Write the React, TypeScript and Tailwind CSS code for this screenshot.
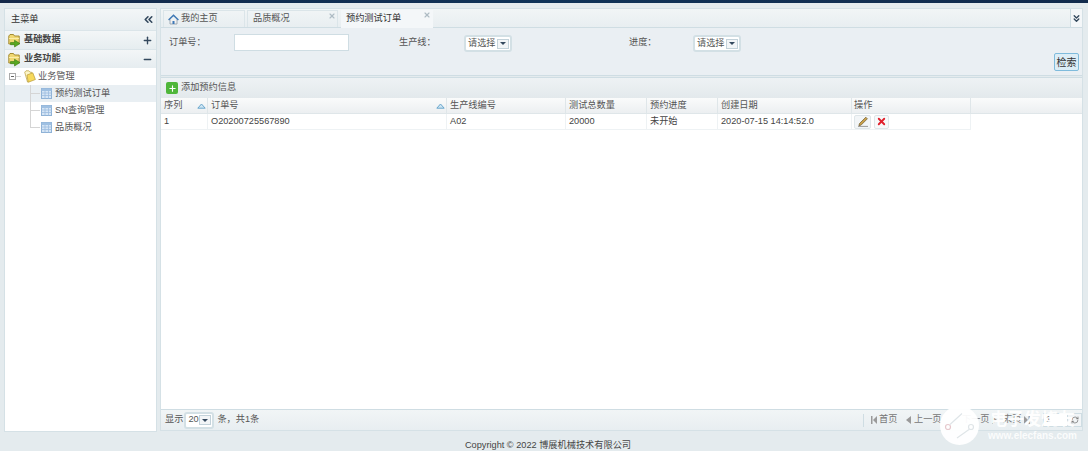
import { ChevronsLeft, ChevronsDown, Minus, Plus, X, RefreshCw } from "lucide-react"

const font = "font-['Liberation_Sans','Noto_Sans_CJK_SC',sans-serif]"

function FolderArrow() {
  return (
    <svg width="13" height="15" viewBox="0 0 13 15" className="shrink-0">
      <path d="M.8 3 2 1.5h3.5L6.5 3h4.7v8H.8z" fill="#f0d873" stroke="#9c8326" strokeWidth="0.9" />
      <path d="M1 5h10v1H1z" fill="#fbeea8" />
      <path d="M2.5 9.5h4V7.2l5.5 3.4-5.5 3.4v-2.3h-4z" fill="#57a820" stroke="#3a7a10" strokeWidth="0.6" />
    </svg>
  )
}

function Folder() {
  return (
    <svg width="12" height="13" viewBox="0 0 12 13" className="shrink-0">
      <path d="M.7 2.2 2 .8h2.8L6 2.2h1.5L9.5 9 3.5 12z" fill="#fdf6c8" stroke="#b89b3a" strokeWidth="0.7" />
      <path d="M3 5 8.8 2.8 11.4 9.5 4.2 12.3z" fill="#f7d95c" stroke="#b89b3a" strokeWidth="0.7" />
    </svg>
  )
}

function GridIcon() {
  return (
    <svg width="11" height="11" viewBox="0 0 11 11" className="shrink-0">
      <rect x="0.5" y="0.5" width="10" height="10" fill="#d5e5f5" stroke="#8fb2d6" />
      <rect x="0.5" y="0.5" width="10" height="2.5" fill="#9fc0e2" />
      <path d="M0.5 5h10M0.5 7.5h10M4 3v7.5M7.5 3v7.5" stroke="#9dbde0" strokeWidth="0.8" />
    </svg>
  )
}

function HomeIcon() {
  return (
    <svg width="11" height="11" viewBox="0 0 11 11" className="shrink-0">
      <path d="M2 5.5V10h7V5.5" fill="#f2f2f2" stroke="#8d9aa5" strokeWidth="0.8" />
      <path d="M4.5 10V7h2v3" fill="#3d78b8" />
      <path d="M.6 6 5.5 1.2 10.4 6" fill="none" stroke="#3f78b5" strokeWidth="1.5" />
    </svg>
  )
}

function SortMark() {
  return (
    <svg width="9" height="6" viewBox="0 0 9 6" className="ml-auto mr-[1px]">
      <path d="M.8 5.2 4.5 1l3.7 4.2z" fill="#cfe6f3" stroke="#69a6cc" strokeWidth="1" />
    </svg>
  )
}

function PencilIcon() {
  return (
    <svg width="12" height="11" viewBox="0 0 12 11">
      <path d="M2.5 7.5 8.8 1.2l1.6 1.6-6.3 6.3-2.2.6z" fill="#c9a04a" stroke="#6f5a2e" strokeWidth="0.7" />
      <path d="M1 10.4h10" stroke="#9a9a9a" strokeWidth="1" />
    </svg>
  )
}

function SkipIcon({ flip }: { flip?: boolean }) {
  return (
    <svg width="6" height="8" viewBox="0 0 6 8" className={flip ? "rotate-180" : ""}>
      <path d="M0 0h1.5v8H0zM6 0v8L2 4z" fill="#9a9a9a" />
    </svg>
  )
}

function ArrowIcon({ flip }: { flip?: boolean }) {
  return (
    <svg width="5" height="8" viewBox="0 0 5 8" className={flip ? "rotate-180" : ""}>
      <path d="M5 0v8L0 4z" fill="#9a9a9a" />
    </svg>
  )
}

function SelectBox({ label, className }: { label: string; className: string }) {
  return (
    <div className={`flex h-[17px] items-center justify-between whitespace-nowrap rounded-[3px] border-2 border-[#d3e0e5] bg-white pl-[2px] pr-[1px] text-[#555] ${className}`}>
      <span>{label}</span>
      <span className="flex h-[10px] w-[12px] items-center justify-center border border-[#c3d2da] bg-[#f2f5f7]">
        <span className="h-0 w-0 border-x-[3px] border-t-[3px] border-x-transparent border-t-[#34495e]" />
      </span>
    </div>
  )
}

const columns = [
  { title: "序列", value: "1", width: "w-[47px]", sort: true },
  { title: "订单号", value: "O20200725567890", width: "w-[239px]", sort: true },
  { title: "生产线编号", value: "A02", width: "w-[119px]" },
  { title: "测试总数量", value: "20000", width: "w-[81px]" },
  { title: "预约进度", value: "未开始", width: "w-[71px]" },
  { title: "创建日期", value: "2020-07-15 14:14:52.0", width: "w-[134px]" },
]

function Sidebar() {
  const groupRow = "flex h-[19px] items-center gap-[3px] border-t border-[#dbe5e9] bg-gradient-to-b from-[#f3f6f7] to-[#e6edf0] pl-[3px] pr-[3px] font-bold text-[#444]"
  const items = ["预约测试订单", "SN查询管理", "品质概况"]
  return (
    <aside className="flex h-[424px] w-[153px] shrink-0 flex-col border border-[#d5e1e6] bg-white text-[9.2px]">
      <div className="flex h-[21px] items-center justify-between bg-gradient-to-b from-[#f3f6f7] to-[#e6edf0] pl-[6px] pr-[1px] text-[#333]">
        <span>主菜单</span>
        <ChevronsLeft size={13} strokeWidth={3} className="text-[#34495e]" />
      </div>
      <div className={groupRow}>
        <FolderArrow />
        <span>基础数据</span>
        <Plus size={11} strokeWidth={3} className="ml-auto text-[#34495e]" />
      </div>
      <div className={groupRow}>
        <FolderArrow />
        <span>业务功能</span>
        <Minus size={11} strokeWidth={3} className="ml-auto text-[#34495e]" />
      </div>
      <div className="flex h-[17px] items-center pl-1 text-[#555]">
        <span className="flex h-[7px] w-[7px] items-center justify-center border border-[#aaa]">
          <span className="h-px w-[3px] bg-[#666]" />
        </span>
        <span className="mr-[3px] h-px w-[5px] bg-[#d5d5d5]" />
        <Folder />
        <span className="ml-[2px]">业务管理</span>
      </div>
      {items.map((name, i) => (
        <div key={name} className={`flex h-[17px] items-center pl-[25px] text-[#555] ${i === 0 ? "bg-[#e9eff3]" : ""}`}>
          <span className={`mr-[1px] w-[10px] self-start border-l border-[#d5d5d5] ${i === items.length - 1 ? "h-[9px]" : "h-full"}`}>
            <span className="block h-[9px] border-b border-[#d5d5d5]" />
          </span>
          <GridIcon />
          <span className="ml-[3px]">{name}</span>
        </div>
      ))}
    </aside>
  )
}

function Tabs() {
  return (
    <div className="flex h-[19px] shrink-0 items-end border-b border-[#cfdde3] bg-gradient-to-b from-[#f1f5f6] to-[#e8eef1] pl-[2px] text-[9.2px]">
      <div className="mr-[2px] flex h-[17px] w-[82px] items-center gap-[2px] border border-b-0 border-[#dbe5e9] pl-[4px] text-[#555]">
        <HomeIcon />
        <span>我的主页</span>
      </div>
      <div className="relative mr-[3px] flex h-[17px] w-[91px] items-center border border-b-0 border-[#dbe5e9] pl-[5px] text-[#555]">
        品质概况
        <X size={8} strokeWidth={3.5} className="absolute right-[1px] top-[1px] text-[#aebcc4]" />
      </div>
      <div className="relative mb-[-1px] flex h-[18px] w-[92px] items-center bg-[#f4f7f9] pl-[5px] text-[#333]">
        预约测试订单
        <X size={8} strokeWidth={3.5} className="absolute right-[2px] top-[1px] text-[#aebcc4]" />
      </div>
      <div className="ml-auto flex h-[18px] w-[12px] items-center justify-center self-start border-l border-[#cfdde3] bg-[#f4f7f9]">
        <ChevronsDown size={11} strokeWidth={3} className="text-[#34495e]" />
      </div>
    </div>
  )
}

function SearchForm() {
  return (
    <div className="flex h-[48px] shrink-0 flex-col border-b border-[#cfdde3] bg-[#eaeff3] text-[9.2px] text-[#555]">
      <div className="mt-[6px] flex h-[17px] items-center">
        <span className="ml-[8px] mt-[1px] w-[65px]">订单号：</span>
        <div className="h-[17px] w-[115px] border border-[#cfdde3] bg-white" />
        <span className="ml-[50px] mt-[1px] w-[65px]">生产线：</span>
        <SelectBox label="请选择" className="mt-[2px] w-[48px]" />
        <span className="ml-[117px] mt-[1px] w-[64px]">进度：</span>
        <SelectBox label="请选择" className="mt-[2px] w-[48px]" />
      </div>
      <button className="ml-auto mr-[3px] mt-[2px] h-[18px] w-[25px] whitespace-nowrap rounded-[2px] border border-[#7fbbdc] bg-[#dcedf6] text-[10px] text-[#333]">
        检索
      </button>
    </div>
  )
}

function Grid() {
  return (
    <div className="flex-1 bg-white text-[9.2px]">
      <div className="flex h-[16px] w-full items-stretch border-b border-[#dfe6e9] bg-gradient-to-b from-[#fafbfb] to-[#eceff1] text-[#555]">
        {columns.map((c) => (
          <div key={c.title} className={`flex items-center border-r border-[#dfe6e9] pl-[3px] pt-[1px] ${c.width}`}>
            {c.title}
            {c.sort && <SortMark />}
          </div>
        ))}
        <div className="flex w-[119px] items-center border-r border-[#dfe6e9] pl-[2px] pt-[1px]">操作</div>
      </div>
      <div className="flex h-[16px] w-[810px] border-b border-[#eef2f4] text-[#444]">
        {columns.map((c) => (
          <div key={c.title} className={`flex items-center border-r border-[#eef2f4] pl-[3px] pt-[1px] ${c.width}`}>
            {c.value}
          </div>
        ))}
        <div className="flex flex-1 items-center gap-[3px] border-r border-[#eef2f4] pl-[2px]">
          <span className="flex h-[14px] w-[17px] items-center justify-center rounded-[2px] border border-[#dfe6e9] bg-[#f2f5f7]">
            <PencilIcon />
          </span>
          <span className="flex h-[14px] w-[15px] items-center justify-center rounded-[2px] border border-[#dfe6e9] bg-[#f7f9fa]">
            <X size={11} strokeWidth={4} className="text-[#e0202c]" />
          </span>
        </div>
      </div>
    </div>
  )
}

function Pager() {
  return (
    <div className="flex h-[21px] shrink-0 items-center whitespace-nowrap border-t border-[#cfdde3] bg-gradient-to-b from-[#f1f5f6] to-[#e8eef1] pl-[4px] text-[9.2px] text-[#555]">
      <span>显示</span>
      <SelectBox label="20" className="ml-[1px] w-[30px]" />
      <span className="ml-[3px]">条，共1条</span>
      <div className="ml-auto flex items-center text-[#777]">
        <span className="h-[13px] w-px bg-[#cfdde3]" />
        <span className="ml-[7px]"><SkipIcon /></span>
        <span className="ml-[2px] w-[19px]">首页</span>
        <span className="ml-[8px]"><ArrowIcon /></span>
        <span className="ml-[3px] w-[28px]">上一页</span>
        <span className="ml-[20px] w-[28px]">下一页</span>
        <span className="ml-[2px]"><ArrowIcon flip /></span>
        <span className="ml-[6px] w-[19px]">末页</span>
        <span className="ml-[2px]"><SkipIcon flip /></span>
        <div className="ml-[13px] flex h-[14px] w-[25px] items-center border border-[#cfdde3] bg-white pl-[2px]">1</div>
        <div className="flex h-[14px] w-[14px] items-center justify-center border border-l-0 border-[#cfdde3] bg-[#f2f5f7]">
          <RefreshCw size={8} className="text-[#666]" />
        </div>
      </div>
    </div>
  )
}

function Watermark() {
  return (
    <div className="pointer-events-none absolute bottom-[6px] right-[11px] flex items-center gap-[9px] whitespace-nowrap">
      <div className="flex h-[39px] w-[39px] items-center justify-center rounded-full bg-white/95">
        <svg width="31" height="31" viewBox="0 0 31 31" fill="none" stroke="#dfe5e8" strokeWidth="1.2">
          <circle cx="4" cy="17" r="2.5" stroke="#e6c9cd" />
          <circle cx="27" cy="17" r="2.5" />
          <path d="M6 14.5 18 3.5M25 19.5 13 28" />
        </svg>
      </div>
      <div className="flex flex-col items-center text-white">
        <span className="text-[17px] font-bold leading-[20px] opacity-95">电子发烧友</span>
        <span className="text-[10px] font-bold leading-[11px] opacity-85">www.elecfans.com</span>
      </div>
    </div>
  )
}

export default function App() {
  return (
    <div className={`relative h-[451px] w-[1088px] overflow-hidden bg-[#e4ebee] ${font}`}>
      <div className="h-[3px] bg-gradient-to-r from-[#14294a] via-[#0f3358] to-[#122b4d]" />
      <div className="flex items-start gap-[3px] pl-[4px] pt-[5px]">
        <Sidebar />
        <main className="flex h-[423px] w-[923px] flex-col border border-[#d5e1e6]">
          <Tabs />
          <SearchForm />
          <div className="mt-[1px] flex h-[21px] shrink-0 items-center gap-[3px] border-t border-[#cfdde3] bg-gradient-to-b from-[#eef2f4] to-[#e3e9ec] pl-[5px] text-[9.2px] text-[#555]">
            <span className="flex h-[12px] w-[12px] items-center justify-center rounded-[2px] bg-[#4fb63a]">
              <Plus size={9} strokeWidth={3} className="text-white" />
            </span>
            添加预约信息
          </div>
          <Grid />
          <Pager />
        </main>
      </div>
      <div className="mt-[7px] pl-[8px] text-center text-[9.2px] leading-[12px] text-[#444]">Copyright © 2022 博展机械技术有限公司</div>
      <Watermark />
    </div>
  )
}
